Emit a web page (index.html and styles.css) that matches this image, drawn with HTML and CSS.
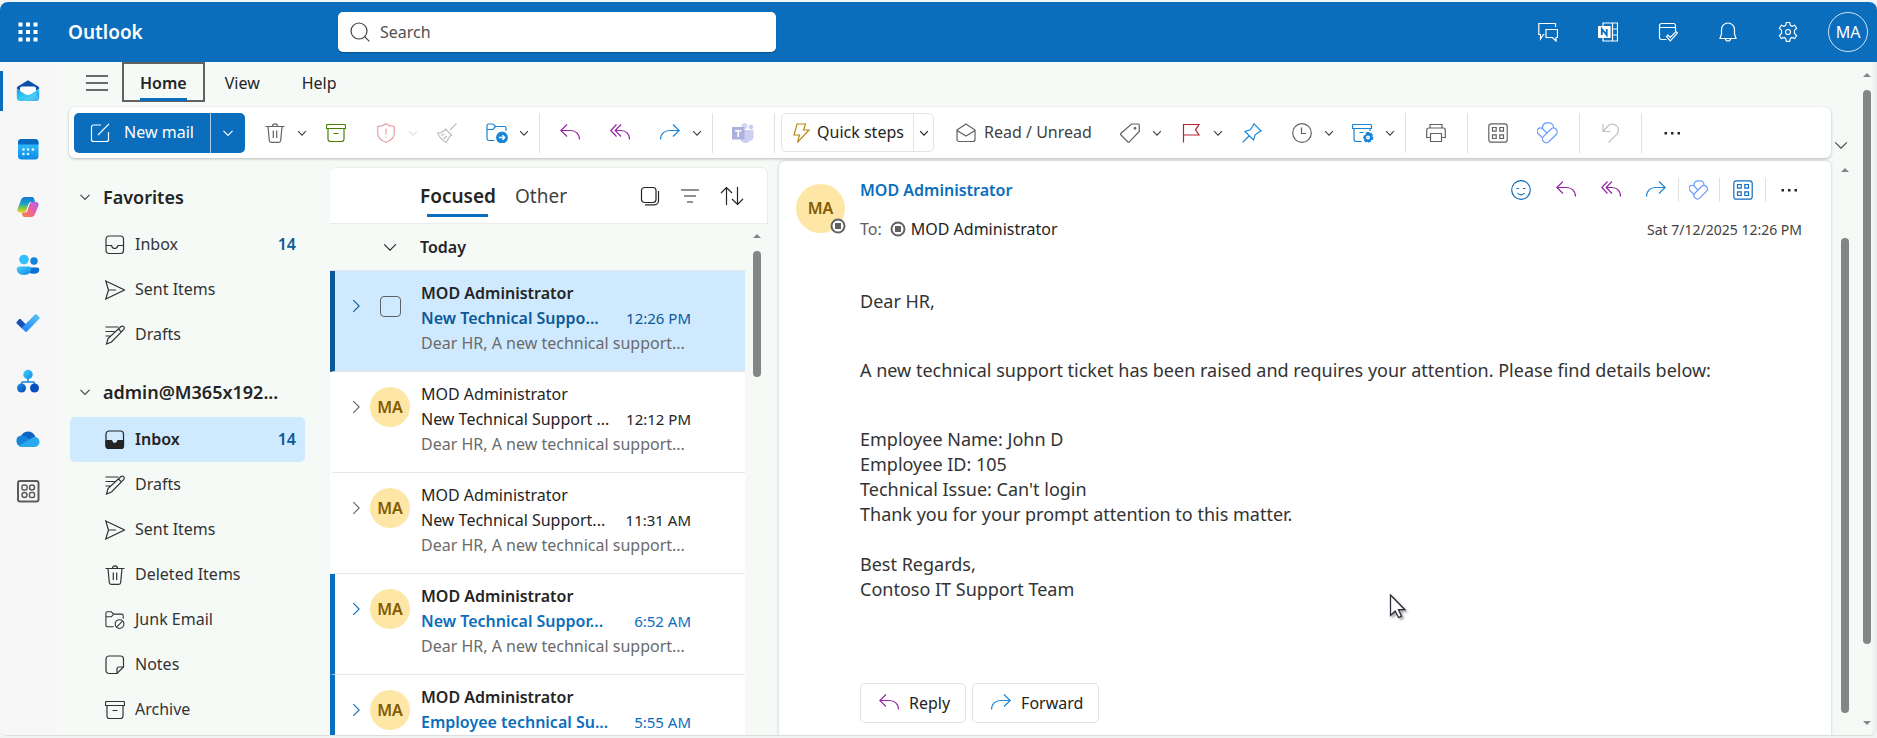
FILE: index.html
```html
<!DOCTYPE html>
<html lang="en">
<head>
<meta charset="utf-8">
<title>Outlook</title>
<link rel="stylesheet" href="styles.css">
</head>
<body>
<svg class="sprite" aria-hidden="true">
  <defs>
    <linearGradient id="g-env" x1="0" y1="0" x2="1" y2="1"><stop offset="0" stop-color="#1b9ae4"/><stop offset=".5" stop-color="#35cdf7"/><stop offset="1" stop-color="#0f7fd6"/></linearGradient>
    <linearGradient id="g-cal" x1="0" y1="0" x2="0" y2="1"><stop offset="0" stop-color="#3ccbff"/><stop offset="1" stop-color="#0b8ae6"/></linearGradient>
    <linearGradient id="g-cop1" x1="0" y1="0" x2="0" y2="1"><stop offset="0" stop-color="#1276d6"/><stop offset=".45" stop-color="#17a6c9"/><stop offset=".7" stop-color="#7fc54a"/><stop offset="1" stop-color="#f5d22a"/></linearGradient>
    <linearGradient id="g-cop2" x1="1" y1="0" x2="0" y2="1"><stop offset="0" stop-color="#a963f0"/><stop offset=".5" stop-color="#ef5f9d"/><stop offset="1" stop-color="#f78a3c"/></linearGradient>
    <linearGradient id="g-chk" x1="0" y1="1" x2="1" y2="0"><stop offset="0" stop-color="#1f7ff0"/><stop offset="1" stop-color="#5cc8fb"/></linearGradient>
    <linearGradient id="g-ball" x1="0" y1="0" x2="1" y2="1"><stop offset="0" stop-color="#41d0ff"/><stop offset="1" stop-color="#1489e0"/></linearGradient>
    <linearGradient id="g-deep" x1="0" y1="0" x2="1" y2="1"><stop offset="0" stop-color="#1c96ea"/><stop offset="1" stop-color="#0a49b4"/></linearGradient>
  </defs>
  <symbol id="i-down" viewBox="0 0 20 20"><path d="M3.5 7l6.5 6.5L16.500 7"/></symbol>
  <symbol id="i-right" viewBox="0 0 20 20"><path d="M7 3.500l6.500 6.500L7 16.500"/></symbol>
  <symbol id="i-apps" viewBox="0 0 20 20"><path fill="currentColor" stroke="none" d="M.5.5h4v4h-4zM8 .5h4v4H8zM15.500.5h4v4h-4zM.5 8h4v4h-4zM8 8h4v4H8zM15.500 8h4v4h-4zM.5 15.500h4v4h-4zM8 15.500h4v4H8zM15.500 15.500h4v4h-4z"/></symbol>
  <symbol id="i-search" viewBox="0 0 20 20"><circle cx="9" cy="9" r="8"/><path d="M14.700 14.700L19.300 19.300"/></symbol>
  <symbol id="i-chat" viewBox="0 0 20 20"><path d="M6.500 12.500H5.500L2.500 17v-4.500H.8v-11h16.700V5M8 7.500h11.500v8H18V19l-3.500-3.500H8z"/></symbol>
  <symbol id="i-note" viewBox="0 0 20 20"><path d="M5 4V1h14.500v18H5v-3M14.500 1v18M14.500 7h5M14.500 13h5"/><path fill="currentColor" d="M.5 4.500H12v11H.5z"/><path class="cut" d="M3.800 13V7l4.900 6V7"/></symbol>
  <symbol id="i-todo" viewBox="0 0 20 20"><path d="M8.500 17.500H3.500a2 2 0 0 1-2-2v-12a2 2 0 0 1 2-2h12a2 2 0 0 1 2 2V9M1.500 5.500h16M8.500 14.500l1.500-1.500 2.300 2.300 5.700-5.800 1.500 1.500-7.200 7.800z"/></symbol>
  <symbol id="i-bell" viewBox="0 0 20 20"><path d="M10 1a6.500 6.500 0 0 0-6.500 6.500v4.500l-1.500 4.500h16L16.500 12V7.500A6.500 6.500 0 0 0 10 1zM7.500 16.500a2.500 2.500 0 0 0 5 0"/></symbol>
  <symbol id="i-gear" viewBox="0 0 20 20"><path d="M8.300.5h3.400l.6 2.800 1.700 1 2.700-1 1.900 3-2.100 2v3.200l2.100 2-1.900 3-2.700-1-1.700 1-.6 2.800H8.300l-.6-2.800-1.700-1-2.700 1-1.900-3 2.100-2V8.300l-2.100-2 1.900-3 2.700 1 1.700-1z"/><circle cx="10" cy="10" r="2.500"/></symbol>
  <symbol id="i-menu" viewBox="0 0 22 16"><path d="M0 1h22M0 8h22M0 15h22"/></symbol>
  <symbol id="i-compose" viewBox="0 0 20 20"><path d="M11 2H3.500a2 2 0 0 0-2 2v12.500a2 2 0 0 0 2 2h13a2 2 0 0 0 2-2V9M8 12L19 .8"/></symbol>
  <symbol id="i-trash" viewBox="0 0 20 20"><path d="M.5 3.500h19M7.500 3.300a2.500 2.500 0 0 1 5 0M3 3.500l1.300 14a2 2 0 0 0 2 1.800h7.400a2 2 0 0 0 2-1.800l1.300-14M8.300 7.500v7.500M11.700 7.500v7.500"/></symbol>
  <symbol id="i-archive" viewBox="0 0 20 20"><path d="M1.500 1.500h17a1 1 0 0 1 1 1v3H.5v-3a1 1 0 0 1 1-1zM2 5.500V16a2.500 2.500 0 0 0 2.500 2.500h11A2.500 2.500 0 0 0 18 16V5.500M7.500 10.500h5"/></symbol>
  <symbol id="i-shield" viewBox="0 0 20 20"><path d="M10 .7c2.500 2 5 2.800 8.300 3V10c0 4.500-3 7.500-8.300 9.300C4.700 17.500 1.700 14.500 1.700 10V3.700C5 3.500 7.500 2.700 10 .7zM10 5.500v6M10 13.500v1.300"/></symbol>
  <symbol id="i-broom" viewBox="0 0 20 20"><path d="M19.500.5L13 7M8 5.500l7 7M9 6.500C6 9 4 10 .7 10c1.500 4 4.500 7.500 8.500 9.300 1-1.500 1.500-3 4.800-7.500M4 12.500l3.500-1.500M6.500 16l3.500-3"/></symbol>
  <symbol id="i-move" viewBox="0 0 22 20"><path d="M8.500 17.500H3a2 2 0 0 1-2-2v-13a1.500 1.500 0 0 1 1.500-1.500H7l2.500 2.500h9a1.500 1.500 0 0 1 1.500 1.500V8M1 6.500h6l2.500-3"/><circle cx="16" cy="14.500" r="5.300" fill="currentColor"/><path class="paper" d="M13 14.500h5.500M16.500 12.300l2.200 2.200-2.200 2.200"/></symbol>
  <symbol id="i-reply" viewBox="0 0 20 20"><path d="M7 1.500L.8 7.500 7 13.500M1 7.500h9.500c5 0 9 3.500 9 9"/></symbol>
  <symbol id="i-replyall" viewBox="0 0 20 20"><path d="M6.500 1.500L.8 7.500l5.700 6M11 1.500L5.200 7.500l5.800 6M5.500 7.500H11c5 0 8.500 3.500 8.500 9"/></symbol>
  <symbol id="i-forward" viewBox="0 0 20 20"><path d="M13 1.500l6.200 6-6.200 6M19 7.500H9.500c-5 0-9 3.500-9 9"/></symbol>
  <symbol id="i-teams" viewBox="0 0 22 20"><g stroke="none"><circle cx="19" cy="4" r="2.300" fill="#c9ccf3"/><circle cx="12.500" cy="3" r="3" fill="#d3d6f8"/><path fill="#cdd0f5" d="M8 7h13.500v6.500c0 3-2 4.500-4 4.500-1 1.500-2.500 2-4 2-4 0-5.500-3-5.500-5.500z"/><path fill="#adb1de" d="M0 4h12.500v12.500H0z"/><path fill="#fff" d="M3 7h6.500v1.600H7.100V14H5.400V8.600H3z"/></g></symbol>
  <symbol id="i-bolt" viewBox="0 0 20 20"><path d="M6 1h8.500L12.500 7H18L6.500 19.300 8.500 12H3z"/></symbol>
  <symbol id="i-open" viewBox="0 0 20 20"><path d="M1 7l9-6 9 6v9.500a2 2 0 0 1-2 2H3a2 2 0 0 1-2-2zM1 7.500l9 5.500 9-5.500"/></symbol>
  <symbol id="i-tag" viewBox="0 0 20 20"><path d="M11.500 1H18a1.300 1.300 0 0 1 1.300 1.300V8.500L9.500 18.700a1.300 1.300 0 0 1-1.800 0L1 12a1.300 1.300 0 0 1 0-1.800z"/><circle cx="15" cy="5.300" r=".8"/></symbol>
  <symbol id="i-flag" viewBox="0 0 20 20"><path d="M2.500 19.500V1.500H18l-3.500 5.300 3.500 5.200H2.500"/></symbol>
  <symbol id="i-pin" viewBox="0 0 20 20"><path d="M12 .8l7.200 7.200-1.700.8-4.300 3-1.700 5.200L3 8.500l5.200-1.700 3-4.300zM7 13L.7 19.300"/></symbol>
  <symbol id="i-clock" viewBox="0 0 20 20"><circle cx="10" cy="10" r="9.300"/><path d="M9.500 4.500V10.500H14"/></symbol>
  <symbol id="i-rules" viewBox="0 0 22 20"><path d="M1.500 1.500h17a1 1 0 0 1 1 1v3H.5v-3a1 1 0 0 1 1-1zM2 5.500V16a2.500 2.500 0 0 0 2.500 2.500h5M18 5.500V8M7.500 9.500h4"/><g fill="currentColor"><path d="M15 9.500h2l.5 1.500 1.500-.6 1.300 1.600-1 1.400 1.500 1-.5 2-1.700.1-.1 1.700-2 .8-1.100-1.300-1.400 1-1.500-1.500.8-1.500-1.500-.8.500-2 1.700-.1.100-1.700z"/></g><circle class="paper" cx="16" cy="14.500" r="1.300"/></symbol>
  <symbol id="i-print" viewBox="0 0 20 20"><path d="M4 5V1.500h12V5M4.500 14.500H.7V7a2 2 0 0 1 2-2h14.600a2 2 0 0 1 2 2v7.500h-3.800M4.500 10.500h11v8h-11z"/></symbol>
  <symbol id="i-grid" viewBox="0 0 20 20"><rect x=".8" y=".8" width="18.400" height="18.400" rx="2.500"/><path d="M4.500 4.500h3.700v3.700H4.500zM11.800 4.500h3.700v3.700h-3.700zM4.500 11.800h3.700v3.700H4.500zM11.800 11.800h3.700v3.700h-3.700z"/></symbol>
  <symbol id="i-viva" viewBox="0 0 20 20"><rect x="5" y=".8" width="10" height="9.500" rx="4"/><rect class="fillpaper" x="-1" y="8" width="13.500" height="6" rx="3" transform="rotate(45 5.700 11)"/><rect class="fillpaper" x="3.700" y="8.800" width="16" height="6.800" rx="3.400" transform="rotate(-45 11.700 12.200)"/></symbol>
  <symbol id="i-undo" viewBox="0 0 20 20"><path d="M3 1v7.500h7.500M3 8.500l4.500-5c3-3.200 7-3 9.200-.7 2.500 2.500 2.200 6.200 0 8.500L8.500 19.500"/></symbol>
  <symbol id="i-dots" viewBox="0 0 20 20"><path fill="currentColor" stroke="none" d="M2.500 9h2.500v2.500H2.500zM9 9h2.500v2.500H9zM15.500 9H18v2.500h-2.500z"/></symbol>
  <symbol id="i-inbox" viewBox="0 0 20 20"><rect x="1" y="1" width="17.500" height="17.500" rx="3"/><path d="M1 10.500h5.500c.5 2 1.500 3 3.200 3s2.700-1 3.300-3h5.500"/></symbol>
  <symbol id="i-inboxfull" viewBox="0 0 20 20"><rect x="1" y="1" width="17.500" height="17.500" rx="3"/><path fill="currentColor" d="M1 10.500h5.500c.5 2 1.500 3 3.200 3s2.700-1 3.300-3h5.500V16a2.500 2.500 0 0 1-2.500 2.500H3.500A2.500 2.500 0 0 1 1 16z"/></symbol>
  <symbol id="i-send" viewBox="0 0 20 20"><path d="M.8 1l18.700 9L.8 19l2.700-9zM3.500 10H11"/></symbol>
  <symbol id="i-draft" viewBox="0 0 20 20"><path d="M.5 2h13M.5 6.500h9M.5 11H6M16 1.500a2 2 0 0 1 2.800 2.800L6.500 17l-5 2 1.500-5.500zM13.500 4l2.800 2.800"/></symbol>
  <symbol id="i-junk" viewBox="0 0 22 20"><path d="M9.500 17.500H3a2 2 0 0 1-2-2v-13A1.500 1.500 0 0 1 2.500 1H7l2.500 2.500h9A1.500 1.500 0 0 1 20 5v3.500M1 6.500h6l2.500-3"/><circle cx="16" cy="14.500" r="4.800"/><path d="M12.700 17.800l6.600-6.600"/></symbol>
  <symbol id="i-notes" viewBox="0 0 20 20"><path d="M4 1h11.500a3 3 0 0 1 3 3v8L12 18.500H4a3 3 0 0 1-3-3V4a3 3 0 0 1 3-3zM18 12h-4a2 2 0 0 0-2 2v4"/></symbol>
  <symbol id="i-select" viewBox="0 0 20 20"><rect x="1.500" y="1.500" width="14.500" height="15" rx="3"/><path d="M5 18.800h9.500a4 4 0 0 0 4-4V5"/></symbol>
  <symbol id="i-filter" viewBox="0 0 20 20"><path d="M1 4h18M4 10h12M7 16h6"/></symbol>
  <symbol id="i-sort" viewBox="0 0 24 20"><path d="M6.500 19V1.500M1 7l5.500-5.500L12 7M17.500 1v17.500M12 13l5.500 5.500L23 13"/></symbol>
  <symbol id="i-smile" viewBox="0 0 20 20"><circle cx="10" cy="10" r="9.300"/><path d="M5.500 8.500h2.500M12 8.500h2.500M6.500 13c2 2.500 5 2.500 7 0"/></symbol>
  <symbol id="i-presence" viewBox="0 0 16 16"><circle class="halo" cx="8" cy="8" r="6.500"/><path fill="currentColor" stroke="none" d="M5 5h6v6H5z"/></symbol>
</svg>

<div class="app">
  <header class="topbar">
    <button class="launcher" aria-label="App launcher"><svg class="ic s20"><use href="#i-apps"/></svg></button>
    <span class="brand">Outlook</span>
    <label class="search"><svg class="ic s20"><use href="#i-search"/></svg><input type="text" placeholder="Search" aria-label="Search"></label>
    <div class="topicons">
      <button aria-label="Chat"><svg class="ic s20"><use href="#i-chat"/></svg></button>
      <button aria-label="OneNote feed"><svg class="ic s20"><use href="#i-note"/></svg></button>
      <button aria-label="My day"><svg class="ic s20"><use href="#i-todo"/></svg></button>
      <button aria-label="Notifications"><svg class="ic s20"><use href="#i-bell"/></svg></button>
      <button aria-label="Settings"><svg class="ic s20"><use href="#i-gear"/></svg></button>
      <button class="me">MA</button>
    </div>
  </header>

  <div class="shell">
    <nav class="rail" aria-label="Apps">
      <a class="on" href="#" aria-label="Mail"><svg class="app-ic" viewBox="0 0 24 24"><path fill="#0b51a8" d="M.8 9.500c0-1 .5-1.800 1.300-2.300L12 1.300l9.900 5.900c.8.500 1.300 1.300 1.300 2.300L12 18z"/><path fill="#fff" d="M4 9.500a2 2 0 0 1 2-2h12a2 2 0 0 1 2 2v6l-8 3-8-3z"/><path fill="url(#g-env)" d="M.8 10l8.500 5.200c1.700 1 3.700 1 5.400 0L23.200 10v8.500a3.500 3.500 0 0 1-3.500 3.500H4.300a3.500 3.500 0 0 1-3.500-3.500z"/><path fill="#7fe3ff" d="M5 22l14-8 4 5a3.500 3.500 0 0 1-3.300 3z" opacity=".45"/></svg></a>
      <a href="#" aria-label="Calendar"><svg class="app-ic" viewBox="0 0 24 24"><rect x="2" y="2" width="20.500" height="20.500" rx="3.500" fill="url(#g-cal)"/><path fill="#0869c3" d="M5.500 2H19a3.500 3.500 0 0 1 3.500 3.500V7.500H2V5.500A3.500 3.500 0 0 1 5.500 2z"/><g fill="#dff5ff"><circle cx="7.500" cy="12.500" r="1.300"/><circle cx="12" cy="12.500" r="1.300"/><circle cx="17" cy="12.500" r="1.300"/><circle cx="7.500" cy="17" r="1.300"/><circle cx="12" cy="17" r="1.300"/></g></svg></a>
      <a href="#" aria-label="Copilot"><svg class="app-ic" viewBox="0 0 24 24"><path fill="url(#g-cop1)" d="M9 2h7c1.500 0 2 1 2.500 3L19 7h-4c-1.500 0-2.200 1-2.600 2.300L10.500 15c-.5 1.500-1 2.500-3 2.500H4c-2 0-3-1.500-2.500-3.500L5 5c.7-2 2-3 4-3z"/><path fill="url(#g-cop2)" d="M15 22H8.500C7 22 6.500 21 6 19l-.4-1.500H9c1.500 0 2.200-1 2.600-2.300L13.500 9.500C14 8 14.500 7 16.500 7H20c2 0 3 1.500 2.500 3.500L19 19c-.7 2-2 3-4 3z"/></svg></a>
      <a href="#" aria-label="People"><svg class="app-ic" viewBox="0 0 24 24"><circle cx="8" cy="6.500" r="4.800" fill="#33c0fa"/><circle cx="18" cy="8" r="3.700" fill="#1281dc"/><path fill="#0a6fcf" d="M12 14.500h9a2.300 2.300 0 0 1 2.300 2.300c0 2.500-2 4-5.300 4-4 0-6-1-6-4z"/><path fill="url(#g-ball)" d="M3.300 13.500h9.500A2.500 2.500 0 0 1 15.300 16c0 3-2.500 6-7.300 6S.8 19 .8 16a2.500 2.500 0 0 1 2.500-2.500z"/></svg></a>
      <a href="#" aria-label="To Do"><svg class="app-ic" viewBox="0 0 24 24"><path fill="#1a51b8" d="M4.500 8L10 13.500 5.800 17.500.8 12.500a1.300 1.300 0 0 1 0-1.800L3.300 8a1 1 0 0 1 1.200 0z"/><path fill="url(#g-chk)" d="M5.500 17L19 3.500a1.300 1.300 0 0 1 1.800 0l2.500 2.500a1.300 1.300 0 0 1 0 1.800L11 20.500a1.300 1.300 0 0 1-1.800 0z"/></svg></a>
      <a href="#" aria-label="Org Explorer"><svg class="app-ic" viewBox="0 0 24 24"><path fill="none" stroke="#1a86d8" stroke-width="1.500" d="M12 9v4M5.500 17v-2.500A1.500 1.500 0 0 1 7 13h10a1.500 1.500 0 0 1 1.500 1.500V17"/><circle cx="12" cy="5.500" r="4.700" fill="url(#g-ball)"/><circle cx="5.500" cy="19" r="4.500" fill="url(#g-deep)"/><circle cx="18.500" cy="19" r="4.500" fill="#0a4fbf"/></svg></a>
      <a href="#" aria-label="OneDrive"><svg class="app-ic" viewBox="0 0 24 24"><path fill="#0f63c0" d="M4 12c.8-4.500 4-7.500 8-7.500 3.500 0 6.300 2 7.500 5.500l-8 4z"/><path fill="#1684db" d="M5.500 19.500A5.500 5.500 0 0 1 5 8.600c2-.4 4 .2 5.500 1.400l11 8-3 2z"/><path fill="#2aa8ee" d="M3 18.700L17.500 10a5 5 0 0 1 1-.1 5 5 0 0 1 0 10.100H5.500c-1 0-1.800-.3-2.500-1.300z"/></svg></a>
      <a href="#" aria-label="More apps"><svg class="app-ic" viewBox="0 0 24 24"><g fill="none" stroke="#5c5c5c"><rect x="2" y="2" width="20.500" height="20.500" rx="2" stroke-width="2"/><rect x="6" y="6" width="5" height="5" rx="1.500" stroke-width="1.500"/><rect x="13.500" y="6" width="5" height="5" rx="2.500" stroke-width="1.500"/><rect x="6" y="13.500" width="5" height="5" rx="2.500" stroke-width="1.500"/><rect x="13.500" y="13.500" width="5" height="5" rx="1.500" stroke-width="1.500"/></g></svg></a>
    </nav>

    <div class="main">
      <div class="tabs">
        <button class="burger" aria-label="Toggle pane"><svg class="menu-ic"><use href="#i-menu"/></svg></button>
        <button class="tab current"><span>Home</span></button>
        <button class="tab">View</button>
        <button class="tab">Help</button>
      </div>

      <div class="ribbon-row">
        <div class="ribbon">
          <div class="newmail">
            <button class="compose"><svg class="ic s20"><use href="#i-compose"/></svg>New mail</button>
            <button class="drop" aria-label="New options"><svg class="ic s14"><use href="#i-down"/></svg></button>
          </div>
          <div class="split first"><button class="tb" aria-label="Delete"><svg class="ic s20"><use href="#i-trash"/></svg></button><button class="chev" aria-label="Delete options"><svg class="ic s12"><use href="#i-down"/></svg></button></div>
          <button class="tb wide green" aria-label="Archive"><svg class="ic s20"><use href="#i-archive"/></svg></button>
          <div class="split faded"><button class="tb red" aria-label="Report"><svg class="ic s20"><use href="#i-shield"/></svg></button><button class="chev" aria-label="Report options"><svg class="ic s12"><use href="#i-down"/></svg></button></div>
          <button class="tb wide faded" aria-label="Sweep"><svg class="ic s20"><use href="#i-broom"/></svg></button>
          <div class="split"><button class="tb blue" aria-label="Move to"><svg class="ic w22"><use href="#i-move"/></svg></button><button class="chev" aria-label="Move options"><svg class="ic s12"><use href="#i-down"/></svg></button></div>
          <i class="sep"></i>
          <button class="tb wide purple" aria-label="Reply"><svg class="ic s20"><use href="#i-reply"/></svg></button>
          <button class="tb wide purple" aria-label="Reply all"><svg class="ic s20"><use href="#i-replyall"/></svg></button>
          <div class="split"><button class="tb blue" aria-label="Forward"><svg class="ic s20"><use href="#i-forward"/></svg></button><button class="chev" aria-label="Forward options"><svg class="ic s12"><use href="#i-down"/></svg></button></div>
          <i class="sep"></i>
          <button class="tb wide" aria-label="Share to Teams"><svg class="ic w22"><use href="#i-teams"/></svg></button>
          <i class="sep"></i>
          <div class="quick">
            <button class="qs"><svg class="ic s20 gold"><use href="#i-bolt"/></svg>Quick steps</button>
            <button class="qd" aria-label="Quick step options"><svg class="ic s12"><use href="#i-down"/></svg></button>
          </div>
          <button class="read"><svg class="ic s20"><use href="#i-open"/></svg>Read / Unread</button>
          <div class="split"><button class="tb" aria-label="Categorize"><svg class="ic s20"><use href="#i-tag"/></svg></button><button class="chev" aria-label="Categories"><svg class="ic s12"><use href="#i-down"/></svg></button></div>
          <div class="split"><button class="tb crimson" aria-label="Flag"><svg class="ic s20"><use href="#i-flag"/></svg></button><button class="chev" aria-label="Flag options"><svg class="ic s12"><use href="#i-down"/></svg></button></div>
          <button class="tb wide blue" aria-label="Pin"><svg class="ic s20"><use href="#i-pin"/></svg></button>
          <div class="split"><button class="tb" aria-label="Snooze"><svg class="ic s20"><use href="#i-clock"/></svg></button><button class="chev" aria-label="Snooze options"><svg class="ic s12"><use href="#i-down"/></svg></button></div>
          <div class="split"><button class="tb blue" aria-label="Policy"><svg class="ic w22"><use href="#i-rules"/></svg></button><button class="chev" aria-label="Policy options"><svg class="ic s12"><use href="#i-down"/></svg></button></div>
          <i class="sep"></i>
          <button class="tb wide" aria-label="Print"><svg class="ic s20"><use href="#i-print"/></svg></button>
          <i class="sep"></i>
          <button class="tb wide" aria-label="Apps"><svg class="ic s20"><use href="#i-grid"/></svg></button>
          <button class="tb wide sky" aria-label="Viva Insights"><svg class="ic s22"><use href="#i-viva"/></svg></button>
          <i class="sep"></i>
          <button class="tb wide faded" aria-label="Undo"><svg class="ic s20"><use href="#i-undo"/></svg></button>
          <i class="sep"></i>
          <button class="tb wide dark" aria-label="More"><svg class="ic s20"><use href="#i-dots"/></svg></button>
        </div>
        <button class="collapse" aria-label="Ribbon options"><svg class="ic s16"><use href="#i-down"/></svg></button>
      </div>

      <div class="panes">
        <nav class="folders" aria-label="Folders">
          <button class="group"><svg class="ic s14"><use href="#i-down"/></svg>Favorites</button>
          <a class="folder" href="#"><svg class="ic s20"><use href="#i-inbox"/></svg>Inbox<b>14</b></a>
          <a class="folder" href="#"><svg class="ic s20"><use href="#i-send"/></svg>Sent Items</a>
          <a class="folder" href="#"><svg class="ic s20"><use href="#i-draft"/></svg>Drafts</a>
          <button class="group account"><svg class="ic s14"><use href="#i-down"/></svg>admin@M365x192...</button>
          <a class="folder on" href="#"><svg class="ic s20"><use href="#i-inboxfull"/></svg>Inbox<b>14</b></a>
          <a class="folder" href="#"><svg class="ic s20"><use href="#i-draft"/></svg>Drafts</a>
          <a class="folder" href="#"><svg class="ic s20"><use href="#i-send"/></svg>Sent Items</a>
          <a class="folder" href="#"><svg class="ic s20"><use href="#i-trash"/></svg>Deleted Items</a>
          <a class="folder" href="#"><svg class="ic s20"><use href="#i-junk"/></svg>Junk Email</a>
          <a class="folder" href="#"><svg class="ic s20"><use href="#i-notes"/></svg>Notes</a>
          <a class="folder" href="#"><svg class="ic s20"><use href="#i-archive"/></svg>Archive</a>
        </nav>

        <section class="list" aria-label="Message list">
          <div class="list-head">
            <button class="pivot current">Focused</button>
            <button class="pivot">Other</button>
            <div class="list-tools">
              <button aria-label="Select"><svg class="ic s20"><use href="#i-select"/></svg></button>
              <button aria-label="Filter"><svg class="ic s20"><use href="#i-filter"/></svg></button>
              <button aria-label="Sort"><svg class="ic w24"><use href="#i-sort"/></svg></button>
            </div>
          </div>
          <div class="list-body">
            <div class="messages">
              <button class="day"><svg class="ic s16"><use href="#i-down"/></svg>Today</button>
              <article class="msg unread picked">
                <svg class="ic s16"><use href="#i-right"/></svg>
                <span class="who"><input type="checkbox" aria-label="Select message"></span>
                <div class="txt"><p class="from">MOD Administrator</p><p class="subj"><span>New Technical Suppo...</span><time>12:26 PM</time></p><p class="prev">Dear HR, A new technical support...</p></div>
              </article>
              <article class="msg">
                <svg class="ic s16"><use href="#i-right"/></svg>
                <span class="who"><span class="avatar">MA</span></span>
                <div class="txt"><p class="from">MOD Administrator</p><p class="subj"><span>New Technical Support ...</span><time>12:12 PM</time></p><p class="prev">Dear HR, A new technical support...</p></div>
              </article>
              <article class="msg">
                <svg class="ic s16"><use href="#i-right"/></svg>
                <span class="who"><span class="avatar">MA</span></span>
                <div class="txt"><p class="from">MOD Administrator</p><p class="subj"><span>New Technical Support...</span><time>11:31 AM</time></p><p class="prev">Dear HR, A new technical support...</p></div>
              </article>
              <article class="msg unread">
                <svg class="ic s16"><use href="#i-right"/></svg>
                <span class="who"><span class="avatar">MA</span></span>
                <div class="txt"><p class="from">MOD Administrator</p><p class="subj"><span>New Technical Suppor...</span><time>6:52 AM</time></p><p class="prev">Dear HR, A new technical support...</p></div>
              </article>
              <article class="msg unread">
                <svg class="ic s16"><use href="#i-right"/></svg>
                <span class="who"><span class="avatar">MA</span></span>
                <div class="txt"><p class="from">MOD Administrator</p><p class="subj"><span>Employee technical Su...</span><time>5:55 AM</time></p></div>
              </article>
            </div>
            <div class="scroll list-scroll"><i class="up"></i><i class="thumb"></i></div>
          </div>
        </section>

        <section class="reading" aria-label="Message">
          <div class="mail-head">
            <span class="avatar big">MA<svg class="badge"><use href="#i-presence"/></svg></span>
            <div class="mail-meta">
              <div class="line">
                <span class="sender">MOD Administrator</span>
                <div class="actions">
                  <button class="azure" aria-label="React"><svg class="ic w22"><use href="#i-smile"/></svg></button>
                  <button class="purple" aria-label="Reply"><svg class="ic s20"><use href="#i-reply"/></svg></button>
                  <button class="purple" aria-label="Reply all"><svg class="ic s20"><use href="#i-replyall"/></svg></button>
                  <button class="blue" aria-label="Forward"><svg class="ic s20"><use href="#i-forward"/></svg></button>
                  <i class="sep"></i>
                  <button class="sky slim" aria-label="Viva Insights"><svg class="ic s20"><use href="#i-viva"/></svg></button>
                  <i class="sep"></i>
                  <button class="azure" aria-label="Apps"><svg class="ic s20"><use href="#i-grid"/></svg></button>
                  <i class="sep"></i>
                  <button class="dark" aria-label="More"><svg class="ic s20"><use href="#i-dots"/></svg></button>
                </div>
              </div>
              <div class="line">
                <p class="to"><span>To:</span><svg class="presence"><use href="#i-presence"/></svg>MOD Administrator</p>
                <time>Sat 7/12/2025 12:26 PM</time>
              </div>
            </div>
          </div>
          <div class="mail-body">
            <p>Dear HR,</p>
            <p>A new technical support ticket has been raised and requires your attention. Please find details below:</p>
            <p>Employee Name: John D<br>Employee ID: 105<br>Technical Issue: Can't login<br>Thank you for your prompt attention to this matter.<br><br>Best Regards,<br>Contoso IT Support Team</p>
          </div>
          <div class="respond">
            <button><svg class="ic s20 purple"><use href="#i-reply"/></svg>Reply</button>
            <button><svg class="ic s20 blue"><use href="#i-forward"/></svg>Forward</button>
          </div>
        </section>
        <div class="scroll read-scroll"><i class="up"></i><i class="thumb"></i></div>
      </div>
    </div>
    <div class="scroll page-scroll"><i class="up"></i><i class="thumb"></i><i class="down"></i></div>
  </div>
</div>
<svg class="cursor" viewBox="0 0 18 26" aria-hidden="true"><path d="M1.500 1v20.500l4.700-4.500 3.300 6.500 3-1.300-3-6.500h6.300z" fill="#fff" stroke="#2b2b3a" stroke-width="1.300"/></svg>
</body>
</html>
```
FILE: styles.css
```css
* { box-sizing: border-box; }
body {
  margin: 0;
  height: 100vh;
  padding: 2px 0 2px;
  overflow: hidden;
  background: #f3f5f4;
  color: #242424;
  font-family: "Noto Sans", "Open Sans", sans-serif;
  font-size: 16px;
  line-height: 25px;
}
button, input { font: inherit; color: inherit; }
button {
  display: flex;
  align-items: center;
  justify-content: center;
  padding: 0;
  border: 0;
  background: none;
}
a { color: inherit; text-decoration: none; }
p { margin: 0; }
.sprite { position: absolute; width: 0; height: 0; }

.ic { flex: none; width: 20px; height: 20px; fill: none; stroke: currentColor; stroke-width: 1.2; }
.s12 { width: 12px; height: 12px; stroke-width: 2; }
.s14 { width: 14px; height: 14px; stroke-width: 1.6; }
.s16 { width: 18px; height: 18px; }
.s22, .w22 { width: 22px; }
.s22 { height: 22px; }
.w24 { width: 24px; }
.cut { stroke: #0a6ebd; stroke-width: 1.8; }
.paper { stroke: #fff; stroke-width: 1.5; fill: none; }
.fillpaper { fill: #fff; }
.green { color: #498205; }
.red { color: #c50f1f; }
.crimson { color: #b8242c; }
.blue { color: #1784d8; }
.azure { color: #0f6cbd; }
.purple { color: #9524a3; }
.sky { color: #6b9dfa; }
.gold { color: #b58a10; }
.dark { color: #242424; }
.faded { opacity: .4; }
.faded .chev { opacity: .4; }

.app {
  display: flex;
  flex-direction: column;
  height: 100%;
  border-radius: 8px;
  overflow: hidden;
  background: #f5faf7;
  border-bottom: 1px solid #dcdfdd;
}

.topbar {
  flex: none;
  display: flex;
  align-items: center;
  height: 60px;
  padding-right: 9px;
  background: #0a6ebd;
  color: #fff;
}
.launcher { width: 55px; height: 60px; }
.brand { width: 283px; padding-left: 13px; font-size: 19px; font-weight: 600; }
.search {
  display: flex;
  align-items: center;
  gap: 8px;
  width: 438px;
  height: 40px;
  padding-left: 12px;
  border-radius: 5px;
  background: #fff;
  color: #424242;
  box-shadow: 0 1px 1px #084f88;
}
.search input { flex: 1; min-width: 0; border: 0; outline: 0; background: none; font-size: 16px; }
.search input::placeholder { color: #505050; opacity: 1; }
.topicons { display: flex; align-items: center; margin-left: auto; }
.topicons button { width: 60px; height: 40px; }
.topicons .me {
  width: 40px;
  height: 40px;
  margin-left: 10px;
  border: 1px solid #cfe4f7;
  border-radius: 50%;
}

.shell { flex: 1; display: flex; min-height: 0; }
.rail {
  flex: none;
  display: flex;
  flex-direction: column;
  width: 59px;
  background: #f7f7f7;
}
.rail a {
  display: flex;
  align-items: center;
  justify-content: center;
  height: 58px;
  border-left: 3px solid transparent;
  padding-right: 6px;
}
.rail .on { height: 40px; margin: 9px 0; border-color: #0a6ebd; }
.rail a:last-child { height: 46px; }
.app-ic { width: 24px; height: 24px; }

.main { flex: 1; display: flex; flex-direction: column; min-width: 0; margin-right: 8px; }
.tabs { flex: none; display: flex; height: 45px; }
.burger { width: 63px; height: 42px; padding-left: 12px; }
.menu-ic { width: 22px; height: 16px; stroke: #3b3b3b; stroke-width: 1.5; }
.tab { height: 40px; padding: 2px 20px 0; margin-right: 2px; }
.tab.current { border: 2px solid #616161; padding: 2px 16px 0; margin-right: 0; font-weight: 600; }
.tab.current span { height: 35px; line-height: 34px; border-bottom: 3px solid #0a6ebd; }

.ribbon-row { flex: none; display: flex; padding-left: 10px; margin-right: -8px; }
.ribbon {
  flex: 1;
  display: flex;
  align-items: center;
  min-width: 0;
  height: 51px;
  padding-left: 5px;
  border-radius: 6px;
  background: #fff;
  color: #616161;
  box-shadow: 0 1px 3px rgba(0, 0, 0, .25);
}
.ribbon > * { flex: none; }
.newmail { display: flex; height: 40px; border-radius: 5px; background: #0a6ebd; color: #fff; }
.compose { gap: 14px; width: 136px; }
.drop { width: 35px; border-left: 1px solid #a9cdea; }
.split { display: flex; margin-left: 7px; }
.split.first { margin-left: 12px; }
.tb { width: 36px; height: 40px; }
.tb.wide { width: 50px; }
.chev { width: 18px; color: #424242; }
.sep { width: 1px; height: 40px; margin: 0 5px 0 6px; background: #e0e0e0; }
.quick {
  display: flex;
  width: 153px;
  height: 39px;
  margin-left: 1px;
  border: 1px solid #e4e4e4;
  border-radius: 5px;
  color: #242424;
}
.qs { flex: 1; gap: 6px; }
.qd { width: 20px; border-left: 1px solid #e4e4e4; }
.read { gap: 8px; width: 162px; margin-left: 9px; color: #424242; }
.read .ic { color: #616161; }
.collapse { width: 20px; padding-top: 24px; margin-right: 8px; color: #424242; }

.panes { flex: 1; display: flex; min-height: 0; }
.folders { flex: none; display: flex; flex-direction: column; width: 271px; padding: 16px 25px 0 11px; }
.group { flex: none; justify-content: flex-start; gap: 11px; height: 46px; margin-bottom: 2px; padding-left: 8px; font-size: 18px; font-weight: 600; }
.group.account { margin-top: 12px; }
.group .ic { color: #424242; }
.folder { display: flex; align-items: center; gap: 10px; flex: none; height: 45px; padding: 0 9px 0 35px; border-radius: 5px; color: #333; }
.folder b { margin-left: auto; color: #0b5a97; font-weight: 600; }
.folder.on { background: #cfe9fe; font-weight: 600; color: #242424; }

.list { flex: none; display: flex; flex-direction: column; width: 438px; margin-top: 9px; }
.list-head {
  flex: none;
  display: flex;
  gap: 19px;
  height: 57px;
  padding: 7px 23px 0 90px;
  background: #fff;
  border: 1px solid #ececec;
  border-left: 0;
  border-radius: 6px 6px 0 0;
}
.pivot { height: 42px; font-size: 19px; color: #424242; }
.pivot.current { color: #242424; font-weight: 600; background: linear-gradient(#0a6ebd, #0a6ebd) center bottom / 61px 3px no-repeat; }
.list-tools { display: flex; align-items: center; gap: 20px; height: 42px; margin-left: auto; }
.list-body { flex: 1; display: flex; min-height: 0; overflow: hidden; }
.messages { width: 415px; }
.day { justify-content: flex-start; gap: 21px; width: 100%; height: 47px; padding-left: 51px; font-weight: 600; border-bottom: 1px solid #e6e6e6; }
.msg {
  display: grid;
  grid-template-columns: 14px 40px 270px;
  column-gap: 10px;
  height: 101px;
  padding: 10px 0 0 12px;
  border-left: 5px solid transparent;
  border-bottom: 1px solid #e6e6e6;
  background: #fff;
}
.msg > .ic { margin-top: 16px; color: #616161; }
.msg.unread { border-left-color: #0a6ebd; }
.msg.unread > .ic { color: #0a6ebd; }
.msg.picked { background: #cfe9fe; border-left-color: #0b5a97; }
.msg.picked > .ic { color: #0b5a97; }
.who { display: flex; align-items: center; justify-content: center; height: 50px; margin-left: -6px; margin-right: -4px; }
.who input { appearance: none; width: 21px; height: 21px; margin: 0; border: 1px solid #616161; border-radius: 4px; }
.avatar {
  display: flex;
  align-items: center;
  justify-content: center;
  width: 40px;
  height: 40px;
  border-radius: 50%;
  background: #fde6a6;
  color: #835b00;
  font-weight: 600;
}
.txt { min-width: 0; white-space: nowrap; }
.subj { display: flex; justify-content: space-between; }
.subj time { font-size: 15px; }
.prev { color: #6b6b6b; }
.unread .from { font-weight: 600; }
.unread .subj { color: #0a6ebd; }
.unread .subj span { font-weight: 600; }
.picked .subj { color: #0b5a97; }

.scroll { flex: none; display: flex; flex-direction: column; align-items: center; }
.up, .down { border: 4px solid transparent; }
.up { border-top: 0; border-bottom-color: #858585; }
.down { border-bottom: 0; border-top-color: #858585; }
.thumb { width: 8px; border-radius: 4px; background: #858585; }
.list-scroll { width: 23px; padding-top: 10px; }
.list-scroll .thumb { height: 126px; margin-top: 13px; }
.read-scroll { width: 28px; margin-right: -8px; padding: 10px 0 22px; }
.read-scroll .thumb { flex: 1; margin-top: 66px; }
.page-scroll { width: 20px; margin-left: -2px; padding: 11px 0 10px; background: linear-gradient(90deg, transparent 70%, #e9ebea); }
.page-scroll .thumb { flex: 1; margin: 13px 0 77px; }

.reading {
  flex: 1;
  min-width: 0;
  margin: 3px 0 0 11px;
  padding: 16px 29px 0 17px;
  border-radius: 6px 6px 0 0;
  background: #fff;
  box-shadow: 0 0 3px rgba(0, 0, 0, .22);
}
.mail-head { display: flex; gap: 15px; }
.avatar.big { position: relative; flex: none; width: 49px; height: 49px; margin-top: 7px; }
.badge { position: absolute; right: -1px; bottom: -1px; width: 16px; height: 16px; }
.badge, .presence { color: #616161; fill: none; stroke: #616161; stroke-width: 2; }
.halo { fill: #fff; }
.mail-meta { flex: 1; }
.line { display: flex; align-items: center; justify-content: space-between; height: 26px; }
.line + .line { margin-top: 13px; }
.sender { color: #0a6ebd; font-weight: 600; }
.line time { font-size: 14px; color: #424242; }
.to { display: flex; align-items: center; }
.to span { color: #616161; }
.presence { width: 16px; height: 16px; margin: 0 5px 0 8px; }
.actions { display: flex; align-items: center; }
.actions button { width: 45px; height: 26px; }
.actions .slim { width: 40px; }
.actions .sep { height: 24px; margin: 0; }
.actions button:last-child { margin-right: -9px; }
.mail-body { padding: 47px 0 0 64px; font-size: 18px; color: #333; }
.mail-body p + p { margin-top: 44px; }
.respond { display: flex; gap: 6px; padding: 81px 0 0 64px; }
.respond button { gap: 10px; height: 40px; padding: 0 15px 0 18px; border: 1px solid #e2e2e2; border-radius: 5px; }

.cursor { position: absolute; left: 1389px; top: 594px; width: 18px; height: 26px; filter: drop-shadow(2px 2px 1px rgba(0, 0, 0, .35)); }
```
